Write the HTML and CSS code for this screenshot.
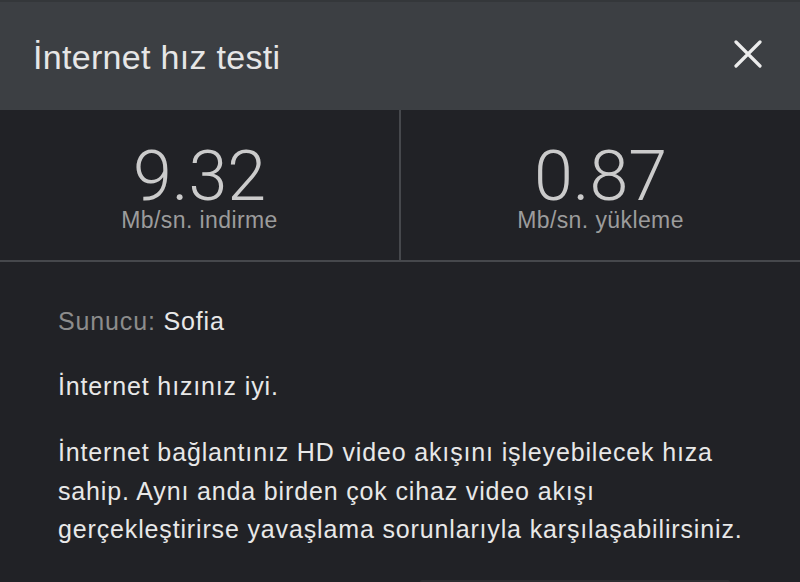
FILE: index.html
```html
<!DOCTYPE html>
<html lang="tr">
<head>
<meta charset="utf-8">
<title>İnternet hız testi</title>
<link rel="stylesheet" href="styles.css">
</head>
<body>
<div class="sheet">
  <header class="header">
    <h1 class="title">İnternet hız testi</h1>
    <button class="close" aria-label="Kapat">
      <svg width="28" height="28" viewBox="0 0 28 28"><path d="M2 2 L26 26 M26 2 L2 26" stroke="#ececec" stroke-width="3.2" stroke-linecap="round" fill="none"/></svg>
    </button>
  </header>
  <section class="stats">
    <div class="stat">
      <div class="stat-value">9.32</div>
      <div class="stat-label">Mb/sn. indirme</div>
    </div>
    <div class="stat-divider"></div>
    <div class="stat">
      <div class="stat-value">0.87</div>
      <div class="stat-label">Mb/sn. yükleme</div>
    </div>
  </section>
  <section class="info">
    <p class="server"><span class="muted">Sunucu:</span> Sofia</p>
    <p class="status">İnternet hızınız iyi.</p>
    <p class="desc">İnternet bağlantınız HD video akışını işleyebilecek hıza sahip. Aynı anda birden çok cihaz video akışı gerçekleştirirse yavaşlama sorunlarıyla karşılaşabilirsiniz.</p>
  </section>
  <div class="footer-btn"></div>
</div>
</body>
</html>
```
FILE: styles.css
```css
html, body {
  margin: 0;
  padding: 0;
  background: #212226;
  height: 100%;
  overflow: hidden;
}
.sheet {
  font-family: "Liberation Sans", Arial, sans-serif;
  color: #e8e8e8;
  display: flex;
  flex-direction: column;
  height: 582px;
}
.header {
  height: 110px;
  box-sizing: border-box;
  background: #3c3f43;
  border-top: 2px solid #34373a;
  display: flex;
  align-items: center;
  justify-content: space-between;
  padding: 0 38px 0 33px;
  flex-shrink: 0;
}
.title {
  margin: 0;
  font-weight: 400;
  font-size: 34px;
  letter-spacing: 0.3px;
  color: #e6e6e6;
  line-height: 1;
  padding-top: 2px;
}
.close {
  background: none;
  border: 0;
  padding: 0;
  width: 28px;
  height: 28px;
  display: block;
  margin-top: -4px;
}
.close svg { display: block; }
.stats {
  display: flex;
  height: 152px;
  box-sizing: border-box;
  border-bottom: 2px solid #46484c;
  flex-shrink: 0;
}
.stat {
  flex: 1;
  display: flex;
  flex-direction: column;
  align-items: center;
  padding-top: 37px;
}
.stat-divider {
  width: 2px;
  background: #46484c;
}
.stat-value {
  font-family: Roboto, "Liberation Sans", sans-serif;
  font-weight: 300;
  font-size: 70px;
  line-height: 58px;
  color: #cbcbcb;
}
.stat-label {
  font-size: 23px;
  line-height: 24px;
  letter-spacing: 0.4px;
  color: #9c9c9c;
  margin-top: 3px;
}
.info {
  padding: 40px 55px 0 58px;
}
.info p {
  margin: 0;
  font-size: 25px;
  letter-spacing: 0.85px;
  line-height: 38px;
}
.muted { color: #8c8c8c; }
.status { margin-top: 27px !important; }
.desc {
  margin-top: 28px !important;
  line-height: 38.5px !important;
}
.footer-btn {
  margin: auto 70px 0 420px;
  height: 2px;
  border-radius: 12px 12px 0 0;
  background: #2c2d31;
}
```
